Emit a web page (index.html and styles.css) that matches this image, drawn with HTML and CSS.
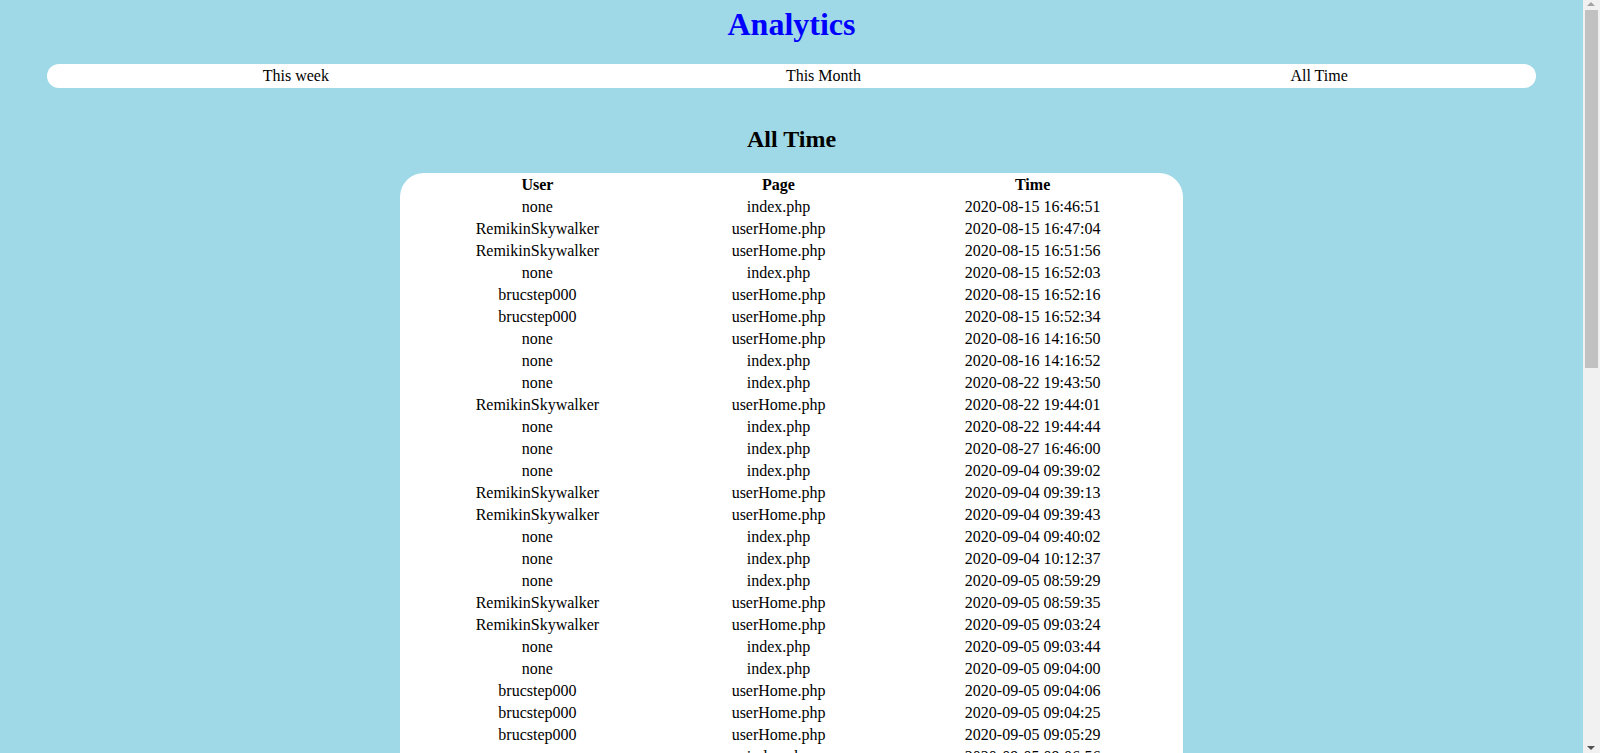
FILE: index.html
```html
<!DOCTYPE html>
<html>
<head>
<meta charset="utf-8">
<title>Analytics</title>
<link rel="stylesheet" href="styles.css">
</head>
<body>
<h1 class="title">Analytics</h1>
<table class="nav">
  <tr>
    <td>This week</td>
    <td>This Month</td>
    <td>All Time</td>
  </tr>
</table>
<h2 class="section">All Time</h2>
<table class="log">
  <thead>
    <tr><th>User</th><th>Page</th><th>Time</th></tr>
  </thead>
  <tbody>
    <tr><td>none</td><td>index.php</td><td>2020-08-15 16:46:51</td></tr>
    <tr><td>RemikinSkywalker</td><td>userHome.php</td><td>2020-08-15 16:47:04</td></tr>
    <tr><td>RemikinSkywalker</td><td>userHome.php</td><td>2020-08-15 16:51:56</td></tr>
    <tr><td>none</td><td>index.php</td><td>2020-08-15 16:52:03</td></tr>
    <tr><td>brucstep000</td><td>userHome.php</td><td>2020-08-15 16:52:16</td></tr>
    <tr><td>brucstep000</td><td>userHome.php</td><td>2020-08-15 16:52:34</td></tr>
    <tr><td>none</td><td>userHome.php</td><td>2020-08-16 14:16:50</td></tr>
    <tr><td>none</td><td>index.php</td><td>2020-08-16 14:16:52</td></tr>
    <tr><td>none</td><td>index.php</td><td>2020-08-22 19:43:50</td></tr>
    <tr><td>RemikinSkywalker</td><td>userHome.php</td><td>2020-08-22 19:44:01</td></tr>
    <tr><td>none</td><td>index.php</td><td>2020-08-22 19:44:44</td></tr>
    <tr><td>none</td><td>index.php</td><td>2020-08-27 16:46:00</td></tr>
    <tr><td>none</td><td>index.php</td><td>2020-09-04 09:39:02</td></tr>
    <tr><td>RemikinSkywalker</td><td>userHome.php</td><td>2020-09-04 09:39:13</td></tr>
    <tr><td>RemikinSkywalker</td><td>userHome.php</td><td>2020-09-04 09:39:43</td></tr>
    <tr><td>none</td><td>index.php</td><td>2020-09-04 09:40:02</td></tr>
    <tr><td>none</td><td>index.php</td><td>2020-09-04 10:12:37</td></tr>
    <tr><td>none</td><td>index.php</td><td>2020-09-05 08:59:29</td></tr>
    <tr><td>RemikinSkywalker</td><td>userHome.php</td><td>2020-09-05 08:59:35</td></tr>
    <tr><td>RemikinSkywalker</td><td>userHome.php</td><td>2020-09-05 09:03:24</td></tr>
    <tr><td>none</td><td>index.php</td><td>2020-09-05 09:03:44</td></tr>
    <tr><td>none</td><td>index.php</td><td>2020-09-05 09:04:00</td></tr>
    <tr><td>brucstep000</td><td>userHome.php</td><td>2020-09-05 09:04:06</td></tr>
    <tr><td>brucstep000</td><td>userHome.php</td><td>2020-09-05 09:04:25</td></tr>
    <tr><td>brucstep000</td><td>userHome.php</td><td>2020-09-05 09:05:29</td></tr>
    <tr><td>none</td><td>index.php</td><td>2020-09-05 09:06:56</td></tr>
  </tbody>
</table>
<div class="scrollbar">
  <div class="arrow arrow-up"></div>
  <div class="thumb"></div>
  <div class="arrow arrow-down"></div>
</div>
</body>
</html>
```

FILE: styles.css
```css
html {
  background: #9fd9e7;
  overflow: hidden;
  height: 100%;
}

body {
  margin: 8px 25px 8px 8px;
  background: #9fd9e7;
  font-family: "Liberation Serif", "Times New Roman", serif;
  font-size: 16px;
  color: #000;
}

.title {
  margin: -2.5px 0 21.44px;
  text-align: center;
  font-size: 32px;
  font-weight: bold;
  color: #0000ff;
}

.nav {
  width: 95%;
  margin: 0 auto;
  background: #fff;
  border-radius: 13px;
  border-spacing: 2px;
}

.nav td {
  padding: 1px;
  text-align: center;
}

.section {
  margin: 38.3px 0 19.92px;
  text-align: center;
  font-size: 24px;
  font-weight: bold;
}

.log {
  width: 50%;
  margin: 0 auto;
  padding-bottom: 60px;
  background: #fff;
  border-radius: 24px;
  border-spacing: 2px;
}

.log th,
.log td {
  padding: 1px;
  line-height: 18px;
  text-align: center;
}

/* imitation of the window's classic scrollbar */
.scrollbar {
  position: fixed;
  top: 0;
  right: 0;
  width: 17px;
  height: 100%;
  background: #f1f1f1;
}

.thumb {
  position: absolute;
  top: 10px;
  left: 2px;
  width: 13px;
  height: 358px;
  background: #c1c1c1;
}

.arrow {
  position: absolute;
  left: 4px;
  width: 0;
  height: 0;
  border-left: 4.5px solid transparent;
  border-right: 4.5px solid transparent;
}

.arrow-up {
  top: 2px;
  border-bottom: 4px solid #a3a3a3;
}

.arrow-down {
  bottom: 3px;
  border-top: 4px solid #505050;
}
```
